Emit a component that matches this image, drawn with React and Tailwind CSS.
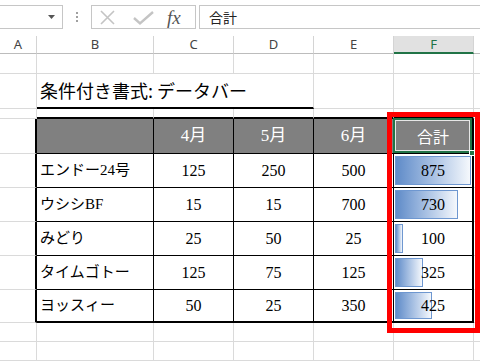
import React from "react";

const rows = [
  ["エンドー24号", 125, 250, 500, 875, 76],
  ["ウシシBF", 15, 15, 700, 730, 63],
  ["みどり", 25, 50, 25, 100, 8],
  ["タイムゴトー", 125, 75, 125, 325, 28],
  ["ヨッスィー", 50, 25, 350, 425, 37],
];

const font = { fontFamily: '"Liberation Serif", "Noto Sans CJK JP", serif' };

function Gray({ className = "" }) {
  return <div className={"border-r border-b border-[#dadada] " + className} />;
}

export default function App() {
  const cols = "grid grid-cols-[37px_117px_80px_80px_80px_80px_1fr]";
  return (
    <div className="relative w-[480px] h-[361px] overflow-hidden bg-white">
      {/* toolbar */}
      <div className="flex h-[36px] items-start pt-[5px]">
        <div className="-ml-px w-[64px] h-[24px] border border-[#c6c6c6] flex items-center justify-end pr-[7px]">
          <svg width="7" height="4" viewBox="0 0 7 4"><path d="M0 0 L7 0 L3.5 4 Z" fill="#555" /></svg>
        </div>
        <div className="w-[28px] h-[24px] flex flex-col items-center justify-center gap-[2px]">
          <div className="w-[2px] h-[2px] bg-[#a0a0a0]" />
          <div className="w-[2px] h-[2px] bg-[#a0a0a0]" />
          <div className="w-[2px] h-[2px] bg-[#a0a0a0]" />
        </div>
        <div className="relative w-[105px] h-[24px] border border-[#c6c6c6] flex items-center">
          <svg width="70" height="24" viewBox="0 0 70 24" className="shrink-0">
            <path d="M9 6 L22 19 M22 6 L9 19" stroke="#c4c4c4" strokeWidth="1.6" fill="none" />
            <path d="M42 13 L48 18.5 L61 7" stroke="#c4c4c4" strokeWidth="2.4" fill="none" />
          </svg>
          <span className="ml-[5px] text-[19px] leading-none italic text-[#555]" style={{ fontFamily: '"Liberation Serif", serif' }}>
            fx
          </span>
        </div>
        <div className="ml-[3px] flex-1 h-[24px] border border-[#c6c6c6] border-r-0 flex items-center pl-[9px] text-[14px] text-[#222]" style={{ fontFamily: '"Noto Sans CJK JP", sans-serif' }}>
          合計
        </div>
      </div>

      {/* column headers */}
      <div className={cols + " h-[18px] text-[13px] text-[#444]"} style={{ fontFamily: '"Noto Sans", sans-serif' }}>
        {["A", "B", "C", "D", "E"].map((c) => (
          <div key={c} className="border-r border-[#d4d4d4] border-b border-b-[#bcbcbc] flex items-center justify-center leading-none">
            {c}
          </div>
        ))}
        <div className="bg-[#e1e1e1] border-r border-[#d4d4d4] border-b-2 border-b-[#217346] flex items-center justify-center leading-none text-[#217346]">
          F
        </div>
        <div className="border-b border-[#bcbcbc]" />
      </div>

      {/* sheet grid */}
      <div className={cols + " grid-rows-[20px_35px_10px_35px_34px_34px_34px_34px_33px_19px_19px]"} style={font}>
        {/* row 1 */}
        <Gray /><Gray /><Gray /><Gray /><Gray /><Gray /><Gray className="border-r-0" />
        {/* row 2 */}
        <Gray />
        <div className="col-span-3 border-r border-r-[#dadada] border-b-2 border-b-black flex items-center pl-[3px] text-[18px] text-black" style={{ fontFamily: '"Noto Sans CJK JP", sans-serif' }}>
          条件付き書式: データバー
        </div>
        <Gray /><Gray /><Gray className="border-r-0" />
        {/* row 3 */}
        <Gray />
        <div className="border-r border-r-[#dadada] border-b-2 border-b-black" />
        <div className="border-r border-r-[#dadada] border-b-2 border-b-black" />
        <div className="border-r border-r-[#dadada] border-b-2 border-b-black" />
        <div className="border-r border-r-[#dadada] border-b-2 border-b-black" />
        <div className="border-r border-r-[#dadada] border-b-2 border-b-black" />
        <Gray className="border-r-0" />
        {/* row 4 header */}
        <div className="border-r-2 border-r-black border-b border-b-[#dadada]" />
        <div className="bg-[#808080] border-r border-b border-black" />
        {["4月", "5月", "6月"].map((h) => (
          <div key={h} className="bg-[#808080] border-r border-b border-black flex items-center justify-center text-white text-[17px]">
            {h}
          </div>
        ))}
        <div className="relative bg-[#808080] border-r-2 border-r-black border-b border-b-black flex items-center justify-center text-white text-[16px]" style={{ fontFamily: '"Noto Sans CJK JP", sans-serif' }}>
          合計
          <div className="absolute -left-px -top-px right-0 bottom-0 border-2 border-[#217346]">
            <div className="absolute inset-0 border border-white/80" />
          </div>
          <div className="absolute right-[-3px] bottom-[-3px] w-[6px] h-[6px] bg-[#217346] border border-white z-10" />
        </div>
        <Gray className="border-r-0" />
        {/* data rows */}
        {rows.map((r, i) => {
          const last = i === rows.length - 1;
          const bb = last ? " border-b-2" : " border-b";
          return (
            <React.Fragment key={i}>
              <div className="border-r-2 border-r-black border-b border-b-[#dadada]" />
              <div className={"border-r border-black flex items-center pl-[3px] text-[15px] text-black" + bb}>
                {r[0]}
              </div>
              {[r[1], r[2], r[3]].map((v, j) => (
                <div key={j} className={"border-r border-black flex items-center justify-center text-[16px] text-black" + bb}>
                  {v}
                </div>
              ))}
              <div className={"relative border-r-2 border-black flex items-center justify-center text-[16px] text-black" + bb}>
                <div
                  className="absolute left-[1px] top-[2px] bottom-[2px] border border-[#6e97d0] bg-linear-to-r from-[#5f8bc8] to-[#f5f8fc]"
                  style={{ width: r[5] + "px" }}
                />
                <span className="relative">{r[4]}</span>
              </div>
              <Gray className="border-r-0" />
            </React.Fragment>
          );
        })}
        {/* rows 10-11 */}
        <Gray /><Gray /><Gray /><Gray /><Gray /><Gray /><Gray className="border-r-0" />
        <Gray /><Gray /><Gray /><Gray /><Gray /><Gray /><Gray className="border-r-0" />
      </div>

      {/* red annotation */}
      <div className="absolute left-[387px] top-[112px] w-[93px] h-[221px] border-[5px] border-[#ff0000] pointer-events-none" />
    </div>
  );
}
